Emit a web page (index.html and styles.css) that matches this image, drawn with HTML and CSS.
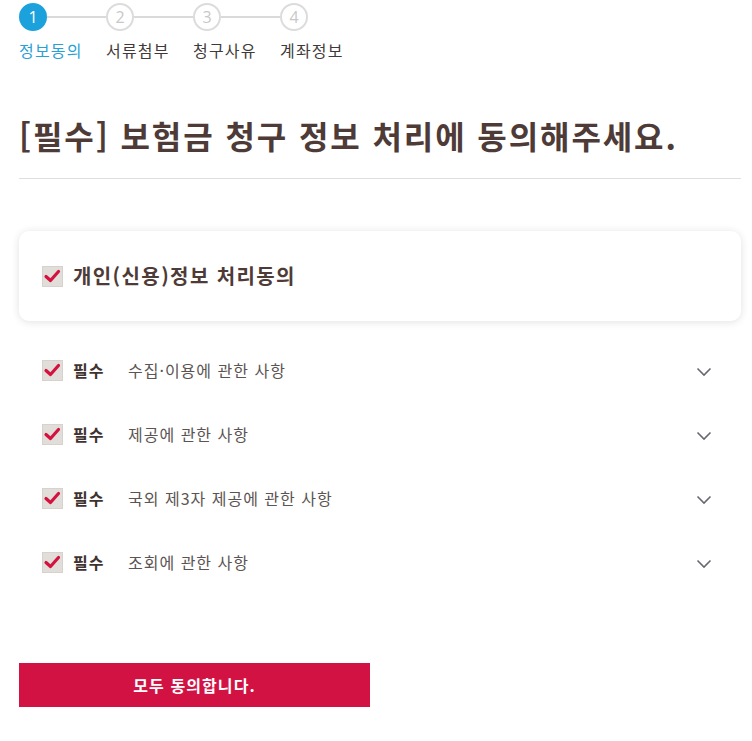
FILE: index.html
```html
<!DOCTYPE html>
<html lang="ko">
<head>
<meta charset="utf-8">
<title>보험금 청구</title>
<link rel="stylesheet" href="styles.css">
</head>
<body>
<div class="page">
  <ol class="steps">
    <li class="step active">
      <div class="step-top"><span class="circle">1</span><span class="line"></span></div>
      <div class="step-label">정보동의</div>
    </li>
    <li class="step">
      <div class="step-top"><span class="circle">2</span><span class="line"></span></div>
      <div class="step-label">서류첨부</div>
    </li>
    <li class="step">
      <div class="step-top"><span class="circle">3</span><span class="line"></span></div>
      <div class="step-label">청구사유</div>
    </li>
    <li class="step last">
      <div class="step-top"><span class="circle">4</span></div>
      <div class="step-label">계좌정보</div>
    </li>
  </ol>

  <h1 class="title">[필수] 보험금 청구 정보 처리에 동의해주세요.</h1>

  <div class="card">
    <span class="check"><svg viewBox="0 0 21 21" width="21" height="21"><path d="M4 10.5 L8.5 14.5 L16.5 5.5" fill="none" stroke="#d4123f" stroke-width="3.2" stroke-linecap="round" stroke-linejoin="round"/></svg></span>
    <span class="card-text">개인(신용)정보 처리동의</span>
  </div>

  <ul class="rows">
    <li class="row">
      <span class="check"><svg viewBox="0 0 21 21" width="21" height="21"><path d="M4 10.5 L8.5 14.5 L16.5 5.5" fill="none" stroke="#d4123f" stroke-width="3.2" stroke-linecap="round" stroke-linejoin="round"/></svg></span>
      <span class="req">필수</span>
      <span class="row-text">수집·이용에 관한 사항</span>
      <svg class="chev" viewBox="0 0 16 10" width="16" height="10"><path d="M1.5 1.5 L8 8 L14.5 1.5" fill="none" stroke="#6b6670" stroke-width="1.6"/></svg>
    </li>
    <li class="row">
      <span class="check"><svg viewBox="0 0 21 21" width="21" height="21"><path d="M4 10.5 L8.5 14.5 L16.5 5.5" fill="none" stroke="#d4123f" stroke-width="3.2" stroke-linecap="round" stroke-linejoin="round"/></svg></span>
      <span class="req">필수</span>
      <span class="row-text">제공에 관한 사항</span>
      <svg class="chev" viewBox="0 0 16 10" width="16" height="10"><path d="M1.5 1.5 L8 8 L14.5 1.5" fill="none" stroke="#6b6670" stroke-width="1.6"/></svg>
    </li>
    <li class="row">
      <span class="check"><svg viewBox="0 0 21 21" width="21" height="21"><path d="M4 10.5 L8.5 14.5 L16.5 5.5" fill="none" stroke="#d4123f" stroke-width="3.2" stroke-linecap="round" stroke-linejoin="round"/></svg></span>
      <span class="req">필수</span>
      <span class="row-text">국외 제3자 제공에 관한 사항</span>
      <svg class="chev" viewBox="0 0 16 10" width="16" height="10"><path d="M1.5 1.5 L8 8 L14.5 1.5" fill="none" stroke="#6b6670" stroke-width="1.6"/></svg>
    </li>
    <li class="row">
      <span class="check"><svg viewBox="0 0 21 21" width="21" height="21"><path d="M4 10.5 L8.5 14.5 L16.5 5.5" fill="none" stroke="#d4123f" stroke-width="3.2" stroke-linecap="round" stroke-linejoin="round"/></svg></span>
      <span class="req">필수</span>
      <span class="row-text">조회에 관한 사항</span>
      <svg class="chev" viewBox="0 0 16 10" width="16" height="10"><path d="M1.5 1.5 L8 8 L14.5 1.5" fill="none" stroke="#6b6670" stroke-width="1.6"/></svg>
    </li>
  </ul>

  <button class="agree-btn" type="button">모두 동의합니다.</button>
</div>
</body>
</html>
```

FILE: styles.css
```css
* { box-sizing: border-box; }
html, body { margin: 0; padding: 0; background: #fff; }
body {
  font-family: "Noto Sans CJK KR", "Noto Sans", "Liberation Sans", sans-serif;
  color: #4e3b37;
}
.page {
  width: 722px;
  margin-left: 19px;
  padding-top: 3px;
}
.steps {
  list-style: none;
  margin: 0;
  padding: 0;
  display: flex;
}
.step { width: 87px; }
.step.last { width: auto; }
.step-top {
  display: flex;
  align-items: center;
  height: 28px;
}
.circle {
  width: 28px;
  height: 28px;
  border-radius: 50%;
  border: 2px solid #dcdcdc;
  background: #fff;
  color: #c8c8c8;
  font-family: "Open Sans", "Noto Sans", sans-serif;
  font-size: 16px;
  line-height: 24px;
  text-align: center;
  flex: none;
}
.step.active .circle {
  background: #1ba2dc;
  border-color: #1ba2dc;
  color: #fff;
}
.line {
  flex: 1;
  height: 2px;
  background: #dadada;
}
.step-label {
  margin-top: 9px;
  font-size: 16px;
  line-height: 20px;
  color: #3f3a39;
  white-space: nowrap;
  letter-spacing: 1.2px;
}
.step.active .step-label { color: #2a9fd6; }

.title {
  margin: 55px 0 0;
  padding-bottom: 23px;
  border-bottom: 1px solid #dedede;
  font-size: 32px;
  line-height: 40px;
  font-weight: 700;
  color: #4e3b37;
  letter-spacing: 1.9px;
  white-space: nowrap;
}

.card {
  margin-top: 52px;
  height: 90px;
  border-radius: 10px;
  background: #fff;
  box-shadow: 0 1px 8px rgba(0, 0, 0, 0.12);
  display: flex;
  align-items: center;
  padding: 0 23px;
}
.check {
  width: 21px;
  height: 21px;
  background: #e1ded9;
  border: 1px solid #d6d3ce;
  display: inline-flex;
  align-items: center;
  justify-content: center;
  flex: none;
}
.check svg { display: block; margin: -1px; }
.card-text {
  margin-left: 10px;
  font-size: 20px;
  line-height: 24px;
  font-weight: 700;
  color: #4e3b37;
  letter-spacing: 1.4px;
}

.rows {
  list-style: none;
  margin: 17px 0 0;
  padding: 0;
}
.row {
  height: 64px;
  display: flex;
  align-items: center;
  padding: 0 29px 0 23px;
}
.req {
  margin-left: 10px;
  width: 55px;
  font-size: 16px;
  font-weight: 700;
  color: #3f3331;
  line-height: 20px;
  letter-spacing: 1px;
}
.row-text {
  flex: 1;
  font-size: 16px;
  line-height: 20px;
  color: #5b5452;
  letter-spacing: 1px;
}
.chev { display: block; margin-top: 4px; }

.agree-btn {
  display: block;
  margin-top: 69px;
  width: 351px;
  height: 44px;
  border: none;
  background: #d31244;
  color: #fff;
  font-family: "Noto Sans CJK KR", "Noto Sans", sans-serif;
  font-size: 16px;
  font-weight: 700;
  letter-spacing: 1.1px;
  cursor: pointer;
}
```
